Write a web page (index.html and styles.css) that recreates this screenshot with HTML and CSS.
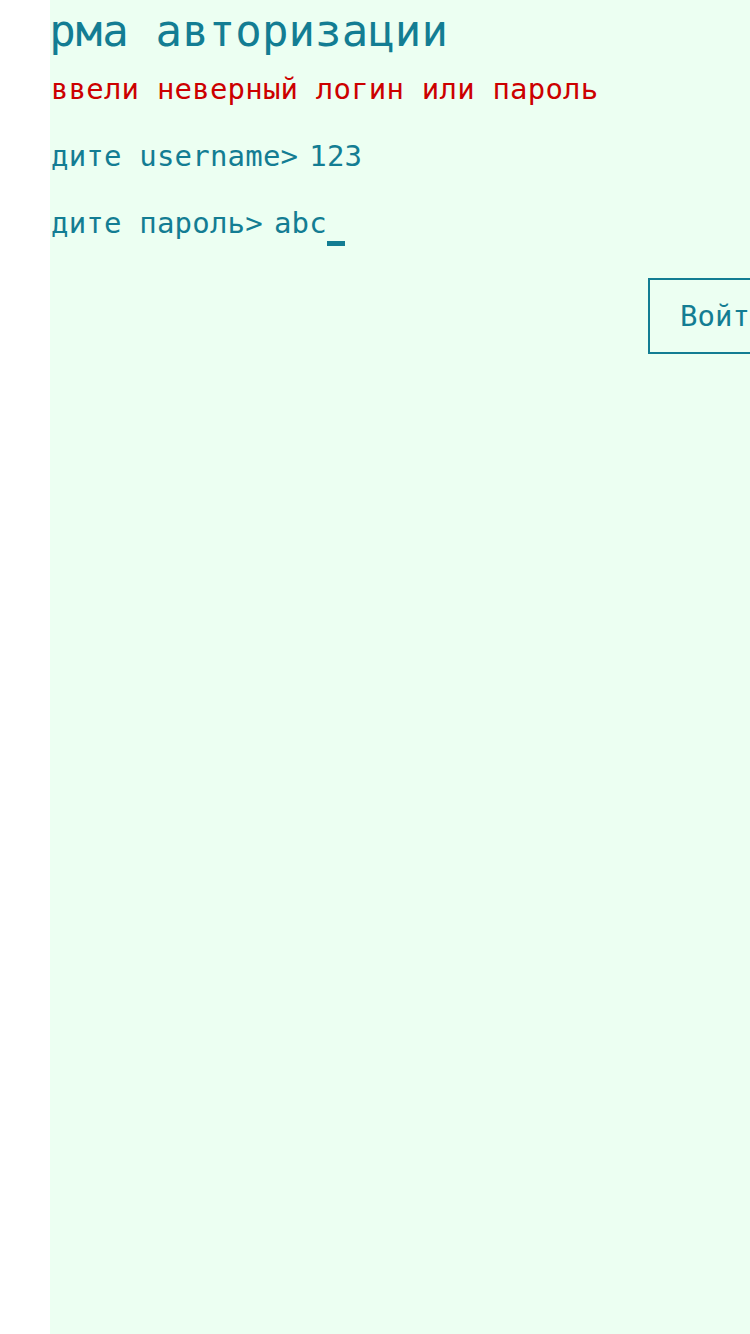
FILE: index.html
```html
<!DOCTYPE html>
<html lang="ru">
<head>
<meta charset="utf-8">
<title>Форма авторизации</title>
<link rel="stylesheet" href="styles.css">
</head>
<body>
<div class="stage">
  <div class="form">
    <h1 class="title">Форма авторизации</h1>
    <p class="error">Вы ввели неверный логин или пароль</p>
    <div class="row"><span class="label">Введите username&gt;</span><span class="value">123</span></div>
    <div class="row"><span class="label">Введите пароль&gt;</span><span class="value">abc</span><span class="cursor"></span></div>
    <div class="actions"><button class="btn" type="button">Войти</button></div>
  </div>
</div>
</body>
</html>
```
FILE: styles.css
```css
html, body {
  margin: 0;
  padding: 0;
  background: #ffffff;
}
.stage {
  margin-left: 50px;
  min-height: 1334px;
  background: #ecfff2;
  overflow: hidden;
}
.form {
  margin-left: -52px;
  width: 900px;
  padding-top: 5px;
  font-family: "DejaVu Sans Mono", monospace;
  color: #137d93;
}
.title {
  margin: 0 0 0 -2px;
  font-size: 44px;
  font-weight: normal;
  line-height: 52px;
  letter-spacing: 0.1px;
}
.error {
  margin: 15px 0 0;
  font-size: 29px;
  line-height: 34px;
  letter-spacing: 0.2px;
  color: #cc0000;
}
.row {
  display: flex;
  align-items: baseline;
  margin-top: 33px;
  font-size: 29px;
  line-height: 34px;
  letter-spacing: 0.2px;
  white-space: pre;
}
.value {
  margin-left: 11px;
}
.cursor {
  display: inline-block;
  width: 18px;
  height: 5px;
  background: #137d93;
  position: relative;
  top: 13px;
}
.actions {
  margin-top: 38px;
  padding-left: 650px;
}
.btn {
  font-family: "DejaVu Sans Mono", monospace;
  font-size: 29px;
  color: #137d93;
  background: transparent;
  border: 2px solid #137d93;
  border-radius: 0;
  height: 76px;
  padding: 0 30px;
  margin: 0;
}
```
